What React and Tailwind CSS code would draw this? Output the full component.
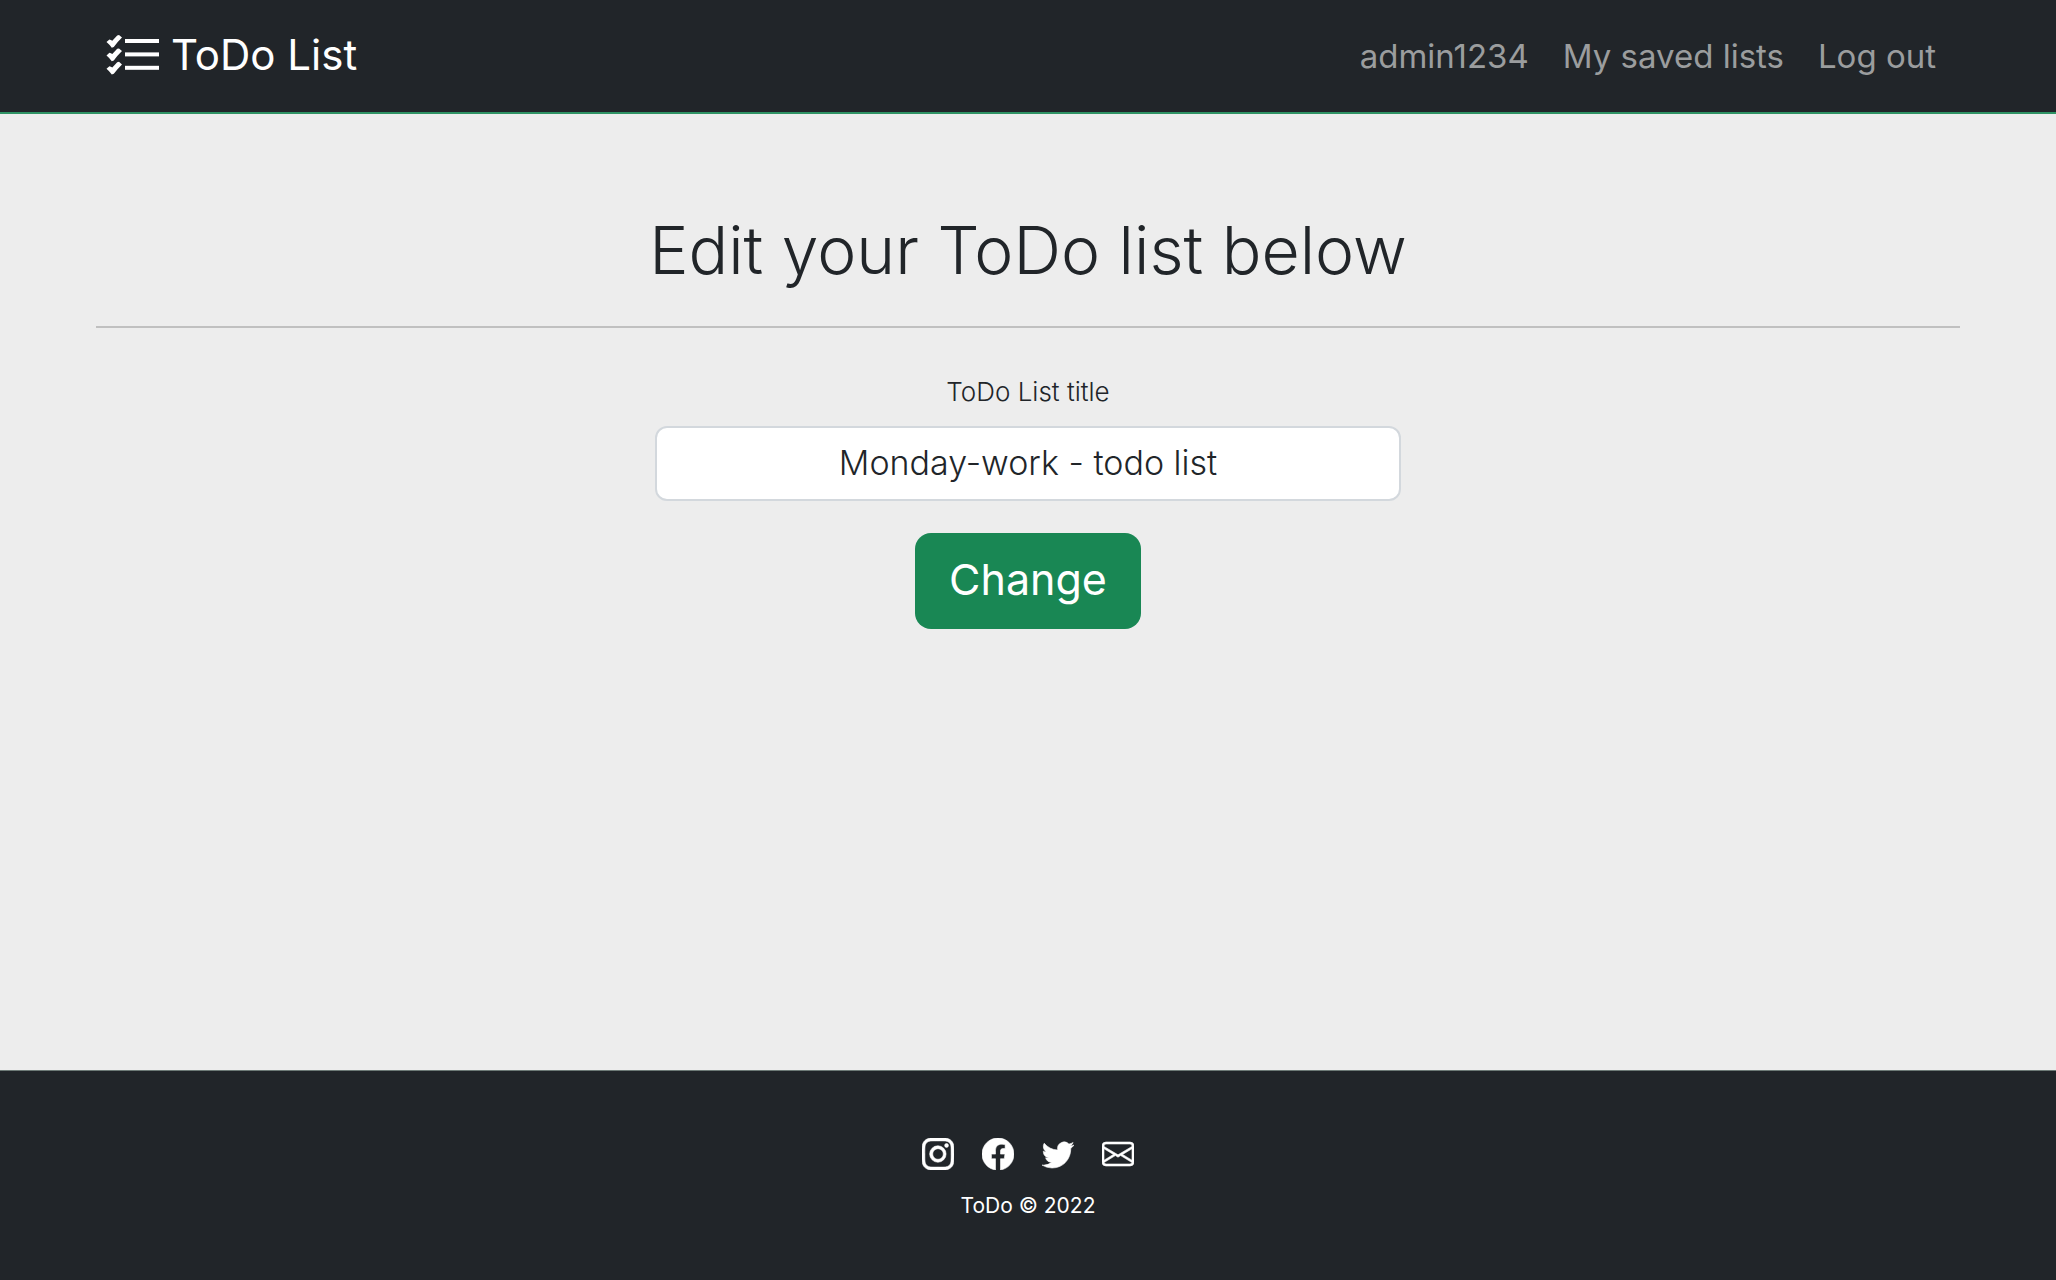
import { BsInstagram, BsFacebook, BsTwitter, BsEnvelope } from "react-icons/bs";

const navLinks = ["admin1234", "My saved lists", "Log out"];

const socialLinks = [
  { label: "Instagram", Icon: BsInstagram },
  { label: "Facebook", Icon: BsFacebook },
  { label: "Twitter", Icon: BsTwitter },
  { label: "Email", Icon: BsEnvelope },
];

function ChecklistLogo() {
  const tops = [0, 13.4, 26.8];
  return (
    <svg viewBox="0 0 53 40" className="h-10 w-[53px]" fill="currentColor" aria-hidden="true">
      {tops.map((top) => (
        <g key={top} transform={`translate(0 ${top})`}>
          <path d="M0.500 7 3.400 4.400Q4.900 4.600 6.300 5.700L11.200 0.400 13 0 16 2.600Q11.500 7 7.800 12L5.800 12.800Q3.400 9.400 0.500 7Z" />
          <rect x="19" y="4" width="34" height="4" />
        </g>
      ))}
    </svg>
  );
}

export default function App() {
  return (
    <div className="flex min-h-screen flex-col bg-[#ededed] font-['Inter',sans-serif] text-[#212529]">
      <header className="border-b-2 border-[#2f9365] bg-[#212529]">
        <nav className="flex h-28 items-center justify-between px-[106px] pb-0.5">
          <a href="#" className="flex items-center gap-3 text-[42px] leading-none text-white">
            <ChecklistLogo />
            ToDo List
          </a>
          <ul className="flex gap-[34px] pt-0.5 pr-3.5 text-[33px] leading-10 text-[#9b9d9e]">
            {navLinks.map((name) => (
              <li key={name}>
                <a href="#">{name}</a>
              </li>
            ))}
          </ul>
        </nav>
      </header>

      <main className="flex flex-1 flex-col px-24 pt-[100px]">
        <h1 className="text-center text-[66px] leading-[72px] font-light">Edit your ToDo list below</h1>
        <hr className="mt-10 border-t-2 border-[#c0c0c0]" />
        <form className="mt-11 flex flex-col items-center" onSubmit={(e) => e.preventDefault()}>
          <label htmlFor="title" className="text-[26px] leading-10 font-light">
            ToDo List title
          </label>
          <input
            id="title"
            type="text"
            defaultValue="Monday-work - todo list"
            className="mt-3.5 h-[75px] w-2/5 rounded-xl border-2 border-[#d3d8dd] bg-white pb-0.5 text-center text-[34px] font-light"
          />
          <button type="submit" className="mt-8 h-24 rounded-2xl bg-[#198754] px-[34px] pb-1 text-[43px] text-white">
            Change
          </button>
        </form>
      </main>

      <footer className="flex h-[210px] flex-col items-center border-t border-[#6d7a76] bg-[#212529] pt-[67px] text-white">
        <ul className="flex gap-7">
          {socialLinks.map(({ label, Icon }) => (
            <li key={label}>
              <a href="#" aria-label={label}>
                <Icon className="size-8 stroke-[0.3]" />
              </a>
            </li>
          ))}
        </ul>
        <p className="mt-5 text-[21px] leading-8">ToDo © 2022</p>
      </footer>
    </div>
  );
}
